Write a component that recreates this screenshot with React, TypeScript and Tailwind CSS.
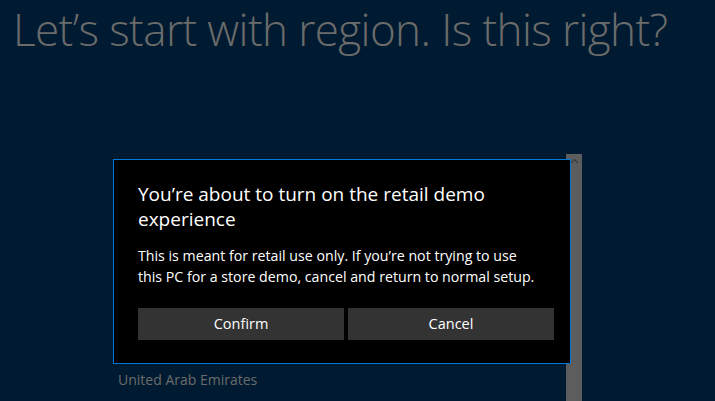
import React from "react";

// Windows OOBE region page with the retail demo confirmation dialog on top
export default function App() {
  return (
    <div
      className="relative w-[715px] h-[401px] overflow-hidden bg-[#001b31]"
      style={{ fontFamily: '"Open Sans", "Noto Sans", sans-serif' }}
    >
      <h1 className="pl-[13px] pt-[2px] text-[44px] leading-[54px] font-light tracking-[-0.6px] text-[#6b6b6b] whitespace-nowrap">
        Let’s start with region. Is this right?
      </h1>

      {/* region list with its scrollbar */}
      <div className="mt-[98px] ml-[113px] flex w-[469px] h-[247px]">
        <div className="flex-1 flex flex-col justify-end pb-[11px] pl-[5px]">
          <div className="text-[14px] text-[#6b6b6b]">United Arab Emirates</div>
        </div>
        <div className="w-[16px] bg-[#5d5d5d] flex justify-center pt-[4px]">
          <svg width="9" height="6" viewBox="0 0 9 6">
            <path d="M1 5 L4.5 1.5 L8 5" stroke="#3a3a3a" strokeWidth="1.2" fill="none" />
          </svg>
        </div>
      </div>

      {/* dialog */}
      <div className="absolute left-[113px] top-[159px] w-[458px] h-[205px] bg-black border border-[#0078d7] pl-[24px] pr-[16px] pt-[22px]">
        <div className="text-[19px] leading-[25px] text-white">
          You’re about to turn on the retail demo experience
        </div>
        <p className="mt-[13px] w-[404px] text-[14.2px] leading-[21px] text-white">
          This is meant for retail use only. If you’re not trying to use this PC for a store demo, cancel and return to normal setup.
        </p>
        <div className="mt-[21px] flex gap-[4px]">
          <button className="w-[206px] h-[32px] bg-[#333333] text-[14.5px] text-white">Confirm</button>
          <button className="w-[206px] h-[32px] bg-[#333333] text-[14.5px] text-white">Cancel</button>
        </div>
      </div>
    </div>
  );
}
